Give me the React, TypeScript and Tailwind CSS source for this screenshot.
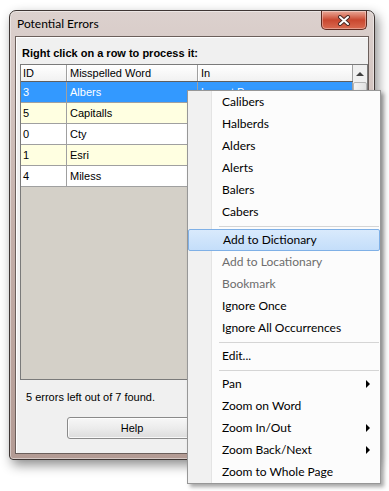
type MenuItem = { label: string; disabled?: boolean; sub?: boolean; active?: boolean } | "sep";

const rows = [
  { id: "3", word: "Albers", where: "Layout Page", cls: "bg-[#3399ff] text-white" },
  { id: "5", word: "Capitalls", where: "", cls: "bg-[#ffffe1] text-black" },
  { id: "0", word: "Cty", where: "", cls: "bg-white text-black" },
  { id: "1", word: "Esri", where: "", cls: "bg-[#ffffe1] text-black" },
  { id: "4", word: "Miless", where: "", cls: "bg-white text-black" },
];

const menu: MenuItem[] = [
  { label: "Calibers" },
  { label: "Halberds" },
  { label: "Alders" },
  { label: "Alerts" },
  { label: "Balers" },
  { label: "Cabers" },
  "sep",
  { label: "Add to Dictionary", active: true },
  { label: "Add to Locationary", disabled: true },
  { label: "Bookmark", disabled: true },
  { label: "Ignore Once" },
  { label: "Ignore All Occurrences" },
  "sep",
  { label: "Edit..." },
  "sep",
  { label: "Pan", sub: true },
  { label: "Zoom on Word" },
  { label: "Zoom In/Out", sub: true },
  { label: "Zoom Back/Next", sub: true },
  { label: "Zoom to Whole Page" },
];

function CloseButton() {
  return (
    <div className="absolute top-0 right-[7px] w-[46px] h-[19px] rounded-b-[5px] border border-t-0 border-[#5e2a20] bg-gradient-to-b from-[#e9a898] via-[#c9472f] to-[#d96a50] shadow-[inset_0_0_0_1px_rgba(255,255,255,0.35)] flex items-center justify-center">
      <svg width="14" height="11" viewBox="0 0 14 11">
        <path d="M3 2 L11 9 M11 2 L3 9" stroke="#4a2a26" strokeWidth="4" strokeLinecap="round" />
        <path d="M3 2 L11 9 M11 2 L3 9" stroke="#ffffff" strokeWidth="2" strokeLinecap="round" />
      </svg>
    </div>
  );
}

function ListView() {
  return (
    <div className="ml-[4px] w-[348px] h-[316px] border border-[#7a7a7a] flex bg-[#d4d0c8]">
      <div className="w-[332px] flex flex-col">
        {/* header */}
        <div className="flex h-[17px] border-b border-[#5f5f5f] bg-gradient-to-b from-white to-[#f1f1f1] leading-[16px]">
          <div className="w-[46px] border-r border-[#a0a0a0] pl-[2px]">ID</div>
          <div className="w-[131px] border-r border-[#a0a0a0] border-l border-l-white pl-[2px]">Misspelled Word</div>
          <div className="w-[155px] border-r border-[#a0a0a0] border-l border-l-white pl-[2px]">In</div>
        </div>
        {rows.map((r) => (
          <div key={r.id} className={"flex h-[21px] border-b border-[#a0a0a0] leading-[20px] " + r.cls}>
            <div className="w-[46px] border-r border-[#a0a0a0] pl-[2px]">{r.id}</div>
            <div className="w-[131px] border-r border-[#a0a0a0] pl-[3px]">{r.word}</div>
            <div className="w-[155px] border-r border-[#a0a0a0] pl-[3px]">{r.where}</div>
          </div>
        ))}
      </div>
      {/* scrollbar */}
      <div className="w-[14px] bg-[#f0f0f0] flex flex-col">
        <div className="h-[17px] flex items-center justify-center">
          <div className="w-0 h-0 border-l-[4px] border-r-[4px] border-b-[4px] border-l-transparent border-r-transparent border-b-[#404040]" />
        </div>
        <div className="h-[60px] border border-[#b5b5b5] bg-gradient-to-r from-[#f5f5f5] to-[#e2e2e2] rounded-[2px]" />
      </div>
    </div>
  );
}

function ContextMenu() {
  return (
    <div className="absolute left-[187px] top-[90px] w-[194px] border border-[#979797] bg-[#fcfcfc] shadow-[3px_3px_4px_rgba(0,0,0,0.35)] font-['Lato','Noto_Sans',sans-serif] text-[12px] text-black">
      <div className="absolute left-0 top-0 bottom-0 w-[24px] bg-[#f1f1f1] border-r border-[#e4e4e4]" />
      <div className="relative flex flex-col">
        {menu.map((m, i) =>
          m === "sep" ? (
            <div key={i} className="h-[6px] flex items-center pl-[31px] pr-[1px]">
              <div className="w-full h-px bg-[#d5d5d5]" />
            </div>
          ) : (
            <div
              key={i}
              className={
                "h-[22px] flex items-center justify-between pl-[34px] pr-[10px] " +
                (m.active ? "bg-gradient-to-b from-[#d9eafc] to-[#c4defa] border border-[#7fb0e6] rounded-[2px] pl-[33px] pr-[9px] " : "") +
                (m.disabled ? "text-[#6d6d6d]" : "text-black")
              }
            >
              <span>{m.label}</span>
              {m.sub && (
                <div className="w-0 h-0 border-t-[4px] border-b-[4px] border-l-[4px] border-t-transparent border-b-transparent border-l-black" />
              )}
            </div>
          )
        )}
      </div>
    </div>
  );
}

export default function App() {
  return (
    <div className="relative w-[389px] h-[491px] bg-white overflow-hidden pl-[9px] pt-[10px]">
      {/* window */}
      <div className="relative w-[366px] h-[450px] border border-[#3e3634] rounded-t-[7px] rounded-b-[4px] bg-gradient-to-b from-[#dcd1ce] via-[#c3aea8] to-[#b39b94] px-[5px] pb-[5px] shadow-[3px_5px_12px_rgba(0,0,0,0.45),inset_0_0_0_1px_rgba(255,255,255,0.45)] flex flex-col">
        <div className="h-[25px] pl-[2px] pt-[5px] leading-[16px] text-[12px] text-black font-['Lato','Noto_Sans',sans-serif]">
          Potential Errors
        </div>
        <CloseButton />
        {/* client area */}
        <div className="w-[354px] h-[418px] border border-[#6b5f5b] bg-[#f0f0f0] shadow-[inset_1px_1px_0_#ffffff] font-['Liberation_Sans',Arial,sans-serif] text-[11px] text-black">
          <div className="h-[27px] pl-[6px] pt-[10px] leading-[13px] font-bold">Right click on a row to process it:</div>
          <ListView />
          <div className="mt-[11px] pl-[10px] leading-[13px]">5 errors left out of 7 found.</div>
          <div className="mt-[13px] ml-[51px] w-[130px] h-[22px] border border-[#8a8a8a] rounded-[3px] bg-gradient-to-b from-[#f7f7f7] via-[#ececec] to-[#dcdcdc] shadow-[inset_0_0_0_1px_rgba(255,255,255,0.8)] flex items-center justify-center">
            Help
          </div>
        </div>
      </div>
      <ContextMenu />
    </div>
  );
}
